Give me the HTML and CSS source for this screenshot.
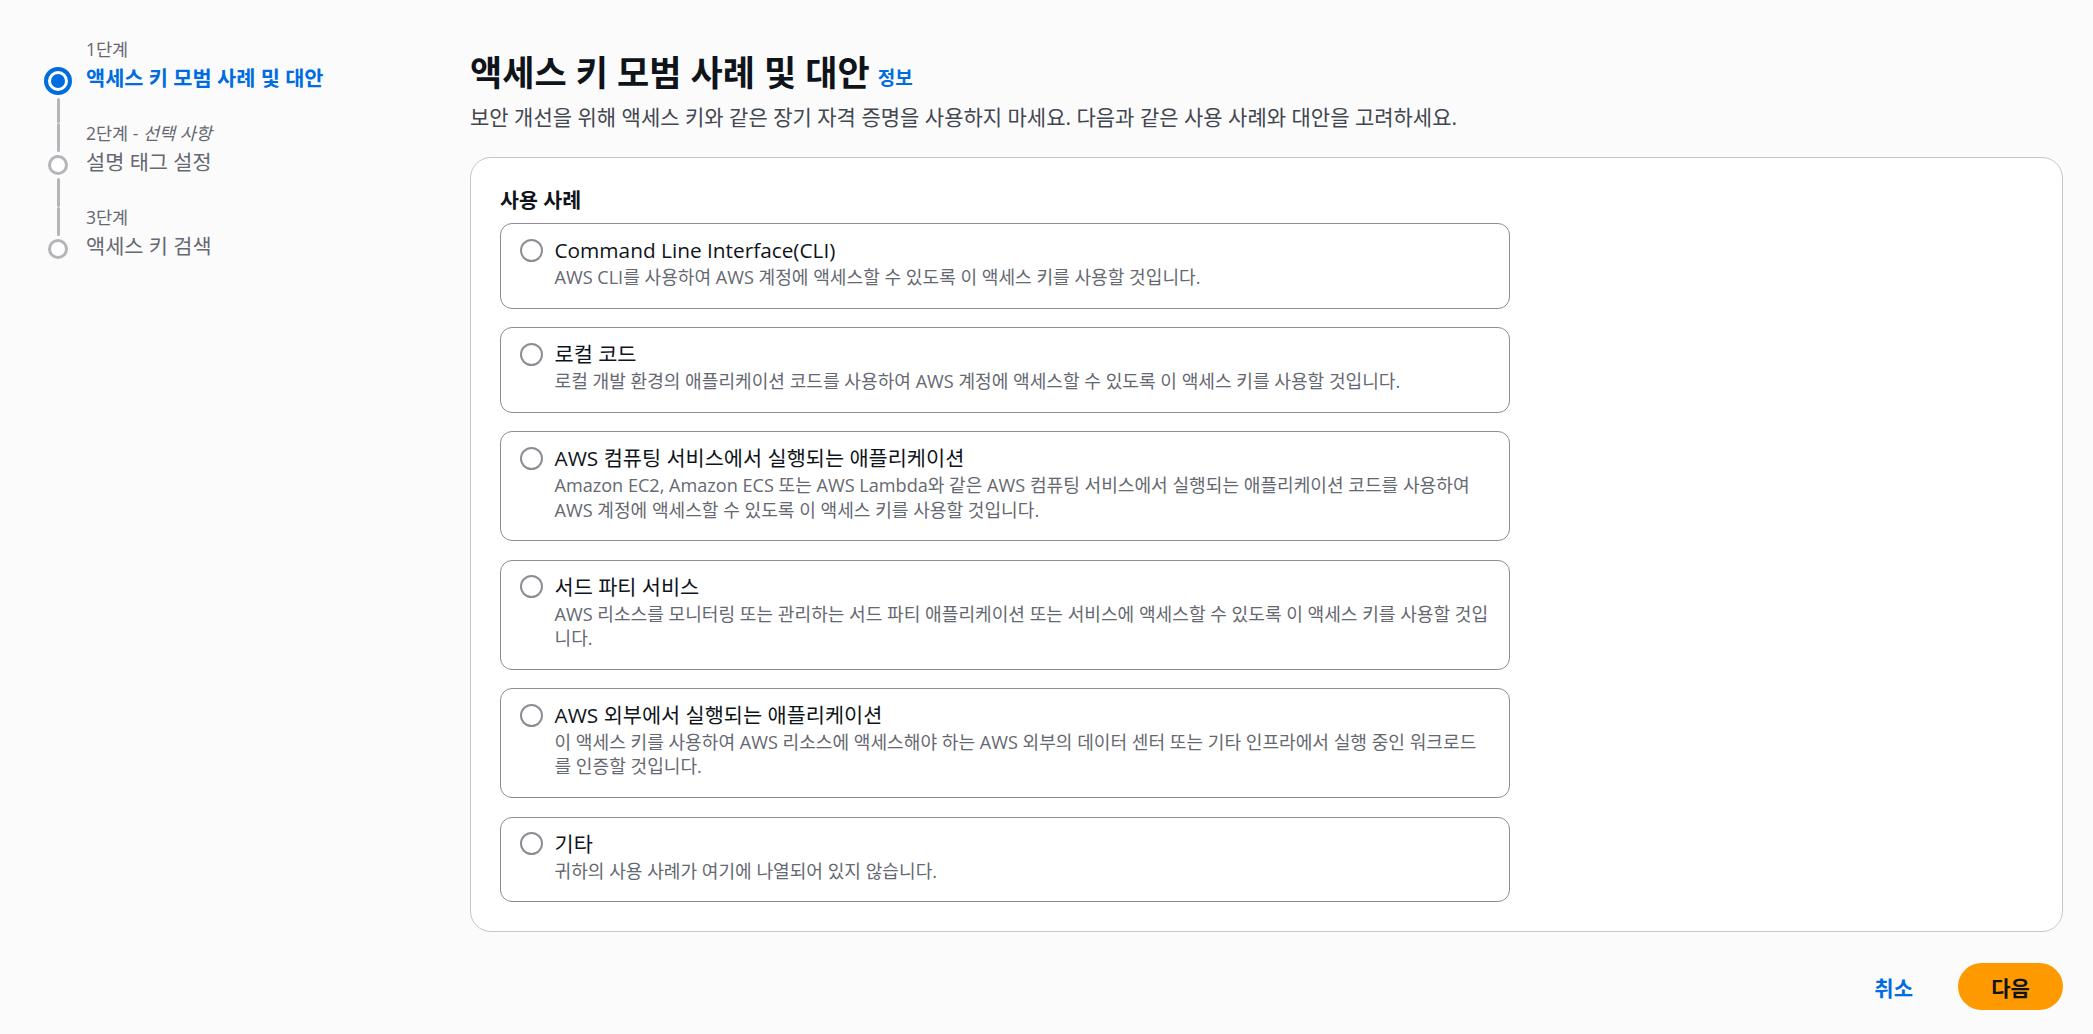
FILE: index.html
```html
<!DOCTYPE html>
<html lang="ko">
<head>
<meta charset="utf-8">
<title>액세스 키 모범 사례 및 대안</title>
<link rel="stylesheet" href="styles.css">
</head>
<body>
<div class="page">
  <nav class="steps">
    <div class="step active">
      <div class="rail">
        <span class="seg seg-top hidden"></span>
        <span class="circle"></span>
        <span class="seg seg-bottom"></span>
      </div>
      <div class="step-text">
        <div class="step-num">1단계</div>
        <div class="step-label">액세스 키 모범 사례 및 대안</div>
      </div>
    </div>
    <div class="step">
      <div class="rail">
        <span class="seg seg-top"></span>
        <span class="circle"></span>
        <span class="seg seg-bottom"></span>
      </div>
      <div class="step-text">
        <div class="step-num">2단계 - <i>선택 사항</i></div>
        <div class="step-label">설명 태그 설정</div>
      </div>
    </div>
    <div class="step last">
      <div class="rail">
        <span class="seg seg-top"></span>
        <span class="circle"></span>
        <span class="seg seg-bottom hidden"></span>
      </div>
      <div class="step-text">
        <div class="step-num">3단계</div>
        <div class="step-label">액세스 키 검색</div>
      </div>
    </div>
  </nav>

  <main class="main">
    <header class="page-header">
      <h1 class="title">액세스 키 모범 사례 및 대안 <a class="info" href="#">정보</a></h1>
      <p class="subtitle">보안 개선을 위해 액세스 키와 같은 장기 자격 증명을 사용하지 마세요. 다음과 같은 사용 사례와 대안을 고려하세요.</p>
    </header>

    <section class="container">
      <h2 class="section-title">사용 사례</h2>
      <div class="tiles">
        <label class="tile">
          <span class="radio"></span>
          <span class="tile-body">
            <span class="tile-title">Command Line Interface(CLI)</span>
            <span class="tile-desc">AWS CLI를 사용하여 AWS 계정에 액세스할 수 있도록 이 액세스 키를 사용할 것입니다.</span>
          </span>
        </label>
        <label class="tile">
          <span class="radio"></span>
          <span class="tile-body">
            <span class="tile-title">로컬 코드</span>
            <span class="tile-desc">로컬 개발 환경의 애플리케이션 코드를 사용하여 AWS 계정에 액세스할 수 있도록 이 액세스 키를 사용할 것입니다.</span>
          </span>
        </label>
        <label class="tile">
          <span class="radio"></span>
          <span class="tile-body">
            <span class="tile-title">AWS 컴퓨팅 서비스에서 실행되는 애플리케이션</span>
            <span class="tile-desc">Amazon EC2, Amazon ECS 또는 AWS Lambda와 같은 AWS 컴퓨팅 서비스에서 실행되는 애플리케이션 코드를 사용하여 AWS 계정에 액세스할 수 있도록 이 액세스 키를 사용할 것입니다.</span>
          </span>
        </label>
        <label class="tile">
          <span class="radio"></span>
          <span class="tile-body">
            <span class="tile-title">서드 파티 서비스</span>
            <span class="tile-desc">AWS 리소스를 모니터링 또는 관리하는 서드 파티 애플리케이션 또는 서비스에 액세스할 수 있도록 이 액세스 키를 사용할 것입니다.</span>
          </span>
        </label>
        <label class="tile">
          <span class="radio"></span>
          <span class="tile-body">
            <span class="tile-title">AWS 외부에서 실행되는 애플리케이션</span>
            <span class="tile-desc">이 액세스 키를 사용하여 AWS 리소스에 액세스해야 하는 AWS 외부의 데이터 센터 또는 기타 인프라에서 실행 중인 워크로드를 인증할 것입니다.</span>
          </span>
        </label>
        <label class="tile">
          <span class="radio"></span>
          <span class="tile-body">
            <span class="tile-title">기타</span>
            <span class="tile-desc">귀하의 사용 사례가 여기에 나열되어 있지 않습니다.</span>
          </span>
        </label>
      </div>
    </section>

    <div class="actions">
      <button class="btn-link" type="button">취소</button>
      <button class="btn-primary" type="button">다음</button>
    </div>
  </main>
</div>
</body>
</html>
```

FILE: styles.css
```css
* { box-sizing: border-box; }

html, body {
  margin: 0;
  padding: 0;
}

body {
  background: #fbfbfb;
  font-family: "Open Sans", "Noto Sans CJK KR", "Noto Sans", sans-serif;
  color: #0f141a;
  width: 2093px;
  height: 1034px;
  overflow: hidden;
}

.page {
  display: flex;
  align-items: flex-start;
}

/* ---------- steps nav ---------- */
.steps {
  width: 470px;
  flex: none;
  padding: 39px 0 0 43px;
  display: flex;
  flex-direction: column;
}

.step {
  display: flex;
  gap: 13px;
}

.rail {
  width: 30px;
  flex: none;
  display: flex;
  flex-direction: column;
  align-items: center;
}

.seg {
  width: 3px;
  background: #b4b4bb;
  border-radius: 2px;
}
.seg.hidden { visibility: hidden; }

.seg-top {
  height: 28.5px;
  margin-bottom: 3px;
}
.seg-bottom {
  flex: 1;
  margin-top: 3px;
}

.circle {
  width: 20px;
  height: 20px;
  border-radius: 50%;
  border: 3px solid #b4b4bb;
  background: #fff;
  flex: none;
}

.step.active .seg-top { height: 24.5px; }
.step.active .circle {
  width: 28px;
  height: 28px;
  border: 4px solid #006ce0;
  position: relative;
}
.step.active .circle::after {
  content: "";
  position: absolute;
  left: 3px;
  top: 3px;
  width: 14px;
  height: 14px;
  border-radius: 50%;
  background: #006ce0;
}

.step-text {
  padding-bottom: 32px;
}
.step.last .step-text { padding-bottom: 0; }

.step-num {
  font-size: 17.5px;
  line-height: 21px;
  color: #656871;
  white-space: nowrap;
}
.step-num i { font-style: italic; }

.step-label {
  margin-top: 5px;
  font-size: 20.8px;
  line-height: 26px;
  color: #656871;
  white-space: nowrap;
}
.step.active .step-label {
  color: #006ce0;
  font-weight: 700;
}

/* ---------- main ---------- */
.main {
  flex: 1;
  padding: 52px 30px 0 0;
  min-width: 0;
}

.title {
  margin: 0;
  font-size: 35px;
  line-height: 42px;
  font-weight: 700;
  color: #0f141a;
  display: flex;
  align-items: baseline;
  gap: 8px;
}

.info {
  font-size: 19px;
  font-weight: 700;
  color: #006ce0;
  text-decoration: none;
  position: relative;
  top: -1px;
}

.subtitle {
  margin: 4px 0 0;
  font-size: 21px;
  line-height: 26px;
  color: #424650;
}

.container {
  margin-top: 27px;
  background: #fff;
  border: 1px solid #c6c6cd;
  border-radius: 21px;
  padding: 29px 29px 29px;
}

.section-title {
  margin: 0 0 10px;
  font-size: 20.6px;
  line-height: 26px;
  font-weight: 700;
  color: #0f141a;
}

.tiles {
  display: flex;
  flex-direction: column;
  gap: 18.5px;
}

.tile {
  width: 1010px;
  display: flex;
  align-items: flex-start;
  gap: 12px;
  border: 1px solid #8c8c94;
  border-radius: 12px;
  padding: 13px 20px 18.5px 18.5px;
  background: #fff;
  cursor: pointer;
}

.radio {
  flex: none;
  width: 23px;
  height: 23px;
  margin-top: 1.5px;
  border-radius: 50%;
  border: 2px solid #8c8c94;
  background: #fff;
}

.tile-body {
  display: flex;
  flex-direction: column;
  min-width: 0;
}

.tile-title {
  font-size: 20.8px;
  line-height: 26px;
  color: #0f141a;
}

.tile-desc {
  margin-top: 2px;
  font-size: 18.1px;
  line-height: 24.2px;
  color: #656871;
}

/* ---------- actions ---------- */
.actions {
  margin-top: 31px;
  display: flex;
  justify-content: flex-end;
  align-items: center;
  gap: 45px;
}

.btn-link,
.btn-primary {
  font-family: inherit;
  font-weight: 700;
  font-size: 21px;
  border: 0;
  cursor: pointer;
}

.btn-link {
  background: transparent;
  color: #006ce0;
  padding: 0;
  height: 47px;
}

.btn-primary {
  background: #ff9900;
  color: #0f141a;
  width: 105px;
  height: 47px;
  border-radius: 24px;
}
```
